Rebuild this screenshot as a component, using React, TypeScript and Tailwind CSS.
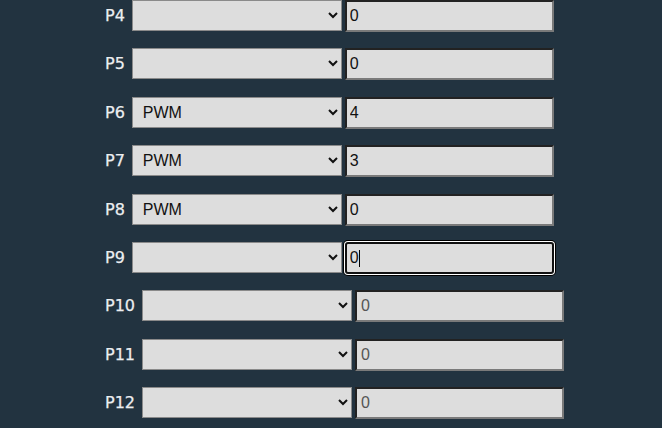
import { useState } from 'react'

interface PinRow {
  pin: string
  mode: string
  value: string
  disabled?: boolean
  focused?: boolean
}

const rows: PinRow[] = [
  { pin: 'P4', mode: '', value: '0' },
  { pin: 'P5', mode: '', value: '0' },
  { pin: 'P6', mode: 'PWM', value: '4' },
  { pin: 'P7', mode: 'PWM', value: '3' },
  { pin: 'P8', mode: 'PWM', value: '0' },
  { pin: 'P9', mode: '', value: '0', focused: true },
  { pin: 'P10', mode: '', value: '0', disabled: true },
  { pin: 'P11', mode: '', value: '0', disabled: true },
  { pin: 'P12', mode: '', value: '0', disabled: true },
]

function Row({ row }: { row: PinRow }) {
  const [mode, setMode] = useState(row.mode)
  const [value, setValue] = useState(row.value)

  return (
    <div className="flex items-start h-[31px]">
      <label className="text-[16px] leading-[31px] text-[#eceef0] [-webkit-text-stroke:0.25px_#eceef0] font-['DejaVu_Sans',sans-serif] mr-[7px]">
        {row.pin}
      </label>
      <select
        value={mode}
        onChange={(e) => setMode(e.target.value)}
        className="w-[210px] h-[31px] pl-[6px] bg-[#dddddd] border border-[#8a8a8a] text-[16px] text-[#111] font-['Liberation_Sans',Arial,sans-serif]"
      >
        <option value=""></option>
        <option value="PWM">PWM</option>
        <option value="IN">IN</option>
        <option value="OUT">OUT</option>
      </select>
      <div className="relative ml-[3px]">
        <input
          type="text"
          value={value}
          readOnly={row.disabled}
          onChange={(e) => setValue(e.target.value)}
          className={
            row.focused
              ? 'block w-[209px] h-[32px] pl-[3px] bg-[#dddddd] border-2 border-[#111] rounded-[3px] shadow-[0_0_0_1px_#fff,0_0_0_2px_#000] outline-none text-[16px] text-[#111] font-["Liberation_Sans",Arial,sans-serif]'
              : row.disabled
                ? 'block w-[209px] h-[32px] pl-[4px] bg-[#dddddd] border-2 border-t-[#222] border-l-[#222] border-b-[#7a7a7a] border-r-[#7a7a7a] outline-none text-[16px] text-[#555] font-["Liberation_Sans",Arial,sans-serif]'
                : 'block w-[209px] h-[32px] pl-[3px] bg-[#dddddd] border-2 border-t-[#222] border-l-[#222] border-b-[#7a7a7a] border-r-[#7a7a7a] outline-none text-[16px] text-[#111] font-["Liberation_Sans",Arial,sans-serif]'
          }
        />
        {row.focused && (
          <span className="absolute left-[14px] top-[8px] w-px h-[17px] bg-black" />
        )}
      </div>
    </div>
  )
}

export default function App() {
  return (
    <div className="w-[662px] h-[428px] overflow-hidden bg-[#223340]">
      <div className="flex flex-col gap-[17.4px] pl-[105px] pt-0">
        {rows.map((row) => (
          <Row key={row.pin} row={row} />
        ))}
      </div>
    </div>
  )
}
